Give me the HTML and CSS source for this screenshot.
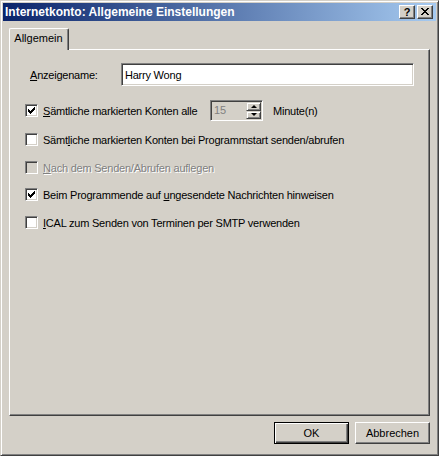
FILE: index.html
```html
<!DOCTYPE html>
<html lang="de">
<head>
<meta charset="utf-8">
<title>Internetkonto: Allgemeine Einstellungen</title>
<link rel="stylesheet" href="styles.css">
</head>
<body>
<div class="window">
  <div class="titlebar">
    <span class="title">Internetkonto: Allgemeine Einstellungen</span>
    <div class="caption-btns">
      <span class="cbtn help">?</span>
      <span class="cbtn close">
        <svg width="8" height="7" viewBox="0 0 8 7" shape-rendering="crispEdges">
          <rect x="0" y="0" width="2" height="1"/><rect x="6" y="0" width="2" height="1"/>
          <rect x="1" y="1" width="2" height="1"/><rect x="5" y="1" width="2" height="1"/>
          <rect x="2" y="2" width="4" height="1"/>
          <rect x="3" y="3" width="2" height="1"/>
          <rect x="2" y="4" width="4" height="1"/>
          <rect x="1" y="5" width="2" height="1"/><rect x="5" y="5" width="2" height="1"/>
          <rect x="0" y="6" width="2" height="1"/><rect x="6" y="6" width="2" height="1"/>
        </svg>
      </span>
    </div>
  </div>
  <div class="body">
    <div class="tabs">
      <div class="tab active">Allgemein</div>
    </div>
    <div class="panel">
      <div class="field">
        <span class="field-label"><u>A</u>nzeigename:</span>
        <div class="edit">Harry Wong</div>
      </div>
      <div class="checks">
        <div class="check-row">
          <span class="cb"><svg class="tick" width="7" height="7" viewBox="0 0 7 7" shape-rendering="crispEdges"><rect x="0" y="2" width="1" height="3"/><rect x="1" y="3" width="1" height="3"/><rect x="2" y="4" width="1" height="3"/><rect x="3" y="3" width="1" height="3"/><rect x="4" y="2" width="1" height="3"/><rect x="5" y="1" width="1" height="3"/><rect x="6" y="0" width="1" height="3"/></svg></span>
          <span class="label label-fixed"><u>S</u>ämtliche markierten Konten alle</span>
          <div class="spin">
            <span class="spin-text">15</span>
            <div class="spin-btns">
              <span class="spin-btn"><span class="arrow-up"></span></span>
              <span class="spin-btn"><span class="arrow-down"></span></span>
            </div>
          </div>
          <span class="label unit">Minute(n)</span>
        </div>
        <div class="check-row row2">
          <span class="cb"></span>
          <span class="label">Sämt<u>l</u>iche markierten Konten bei Programmstart senden/abrufen</span>
        </div>
        <div class="check-row disabled">
          <span class="cb"></span>
          <span class="label"><u>N</u>ach dem Senden/Abrufen auflegen</span>
        </div>
        <div class="check-row row4">
          <span class="cb"><svg class="tick" width="7" height="7" viewBox="0 0 7 7" shape-rendering="crispEdges"><rect x="0" y="2" width="1" height="3"/><rect x="1" y="3" width="1" height="3"/><rect x="2" y="4" width="1" height="3"/><rect x="3" y="3" width="1" height="3"/><rect x="4" y="2" width="1" height="3"/><rect x="5" y="1" width="1" height="3"/><rect x="6" y="0" width="1" height="3"/></svg></span>
          <span class="label">Beim Programmende auf <u>u</u>ngesendete Nachrichten hinweisen</span>
        </div>
        <div class="check-row">
          <span class="cb"></span>
          <span class="label"><u>I</u>CAL zum Senden von Terminen per SMTP verwenden</span>
        </div>
      </div>
    </div>
    <div class="footer">
      <button class="btn default">OK</button>
      <button class="btn">Abbrechen</button>
    </div>
  </div>
</div>
</body>
</html>
```
FILE: styles.css
```css
* { box-sizing: border-box; }
html, body { margin: 0; padding: 0; background: #D4D0C8; }
body {
  font-family: "Liberation Sans", Arial, sans-serif;
  font-size: 11px;
  color: #000;
}
.window {
  width: 439px;
  height: 456px;
  background: #D4D0C8;
  border: 1px solid;
  border-color: #D4D0C8 #404040 #404040 #D4D0C8;
  box-shadow: inset 1px 1px #fff, inset -1px -1px #808080;
  padding: 2px;
  display: flex;
  flex-direction: column;
}
.titlebar {
  height: 18px;
  flex: none;
  background: linear-gradient(to right, #0A246A, #A6CAF0);
  display: flex;
  align-items: center;
  justify-content: space-between;
  padding: 0 3px 0 2px;
}
.title {
  color: #fff;
  font-weight: bold;
  font-size: 12px;
  white-space: nowrap;
}
.caption-btns { display: flex; gap: 2px; }
.cbtn {
  width: 16px;
  height: 14px;
  background: #D4D0C8;
  border: 1px solid;
  border-color: #fff #404040 #404040 #fff;
  box-shadow: inset -1px -1px #808080;
  display: flex;
  align-items: center;
  justify-content: center;
}
.help { font-weight: bold; font-size: 11px; line-height: 12px; padding-bottom: 1px; }
.close svg { fill: #000; display: block; margin-bottom: 1px; }
.body {
  flex: 1;
  display: flex;
  flex-direction: column;
  padding: 7px 6px 0 6px;
}
.tabs { display: flex; height: 21px; position: relative; z-index: 1; }
.tab {
  width: 60px;
  height: 22px;
  background: #D4D0C8;
  border-left: 1px solid #fff;
  border-top: 1px solid #fff;
  border-right: 1px solid #404040;
  border-radius: 2px 2px 0 0;
  box-shadow: inset -1px 0 #808080;
  text-align: center;
  line-height: 18px;
  padding-right: 1px;
}
.panel {
  height: 367px;
  flex: none;
  border: 1px solid;
  border-color: #fff #404040 #404040 #fff;
  box-shadow: inset -1px -1px #808080;
  padding: 13px 15px 0 15px;
  display: flex;
  flex-direction: column;
  letter-spacing: -0.22px;
}
.field { display: flex; align-items: center; height: 23px; padding-left: 5px; }
.field-label { width: 91px; flex: none; }
.edit {
  flex: 1;
  height: 23px;
  background: #fff;
  border: 1px solid;
  border-color: #808080 #fff #fff #808080;
  box-shadow: inset 1px 1px #404040, inset -1px -1px #D4D0C8;
  padding: 0 3px;
  display: flex;
  align-items: center;
}
.checks { display: flex; flex-direction: column; gap: 15px; margin-top: 18px; }
.check-row { display: flex; align-items: center; height: 13px; white-space: nowrap; }
.row2 { margin-top: 1px; }
.row4 { margin-top: -1px; }
.cb {
  width: 13px;
  height: 13px;
  flex: none;
  background: #fff;
  border: 1px solid;
  border-color: #808080 #fff #fff #808080;
  box-shadow: inset 1px 1px #404040, inset -1px -1px #D4D0C8;
  display: flex;
  align-items: center;
  justify-content: center;
  margin-right: 5px;
}
.tick { fill: #000; display: block; }
.label u, .field-label u { text-underline-offset: 1px; }
.label-fixed { width: 167px; flex: none; }
.disabled .cb { background: #D4D0C8; }
.disabled .label { color: #808080; text-shadow: 1px 1px #fff; }
.spin {
  width: 53px;
  height: 21px;
  flex: none;
  background: #D4D0C8;
  border: 1px solid;
  border-color: #808080 #fff #fff #808080;
  box-shadow: inset 1px 1px #404040, inset -1px -1px #D4D0C8;
  padding: 1px;
  display: flex;
}
.spin-text { flex: 1; color: #808080; padding-left: 2px; line-height: 17px; }
.spin-btns { width: 15px; display: flex; flex-direction: column; }
.spin-btn {
  flex: 1;
  background: #D4D0C8;
  border: 1px solid;
  border-color: #D4D0C8 #404040 #404040 #D4D0C8;
  box-shadow: inset 1px 1px #fff, inset -1px -1px #808080;
  display: flex;
  align-items: center;
  justify-content: center;
}
.arrow-up { width: 0; height: 0; border-left: 3px solid transparent; border-right: 3px solid transparent; border-bottom: 3px solid #000; }
.arrow-down { width: 0; height: 0; border-left: 3px solid transparent; border-right: 3px solid transparent; border-top: 3px solid #000; }
.unit { margin-left: 10px; }
.footer { display: flex; justify-content: flex-end; gap: 6px; margin-top: 6px; }
.btn {
  width: 75px;
  height: 22px;
  font-family: inherit;
  font-size: 11px;
  color: #000;
  background: #D4D0C8;
  border: 1px solid;
  border-color: #fff #404040 #404040 #fff;
  box-shadow: inset -1px -1px #808080;
  padding: 0;
  margin: 0;
}
.btn.default {
  border: 1px solid #000;
  box-shadow: inset 1px 1px #fff, inset -1px -1px #404040, inset -2px -2px #808080;
}
```
